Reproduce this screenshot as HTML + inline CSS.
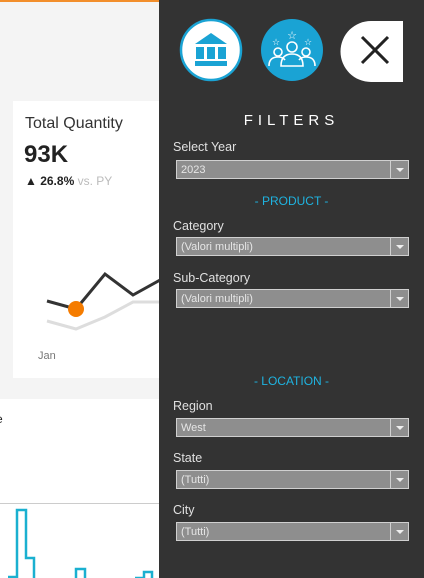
<!DOCTYPE html>
<html><head><style>
body{margin:0;width:424px;height:578px;overflow:hidden;background:#f4f4f4;position:relative;font-family:"Liberation Sans","DejaVu Sans",sans-serif}
.abs{position:absolute}
.dd{position:absolute;left:176px;width:231px;height:17px;background:#8e8e8e;border:1px solid #d0d0d0;color:#e6e6e6;font-size:11px;line-height:18px;box-sizing:content-box}
.dd span{padding-left:4px}
.dd .ar{position:absolute;right:0;top:0;width:17px;height:17px;border-left:1px solid #d0d0d0}
.dd .ar:after{content:"";position:absolute;left:5px;top:7px;border-left:4px solid transparent;border-right:4px solid transparent;border-top:4px solid #eee}
.lbl{position:absolute;left:173px;color:#e0e0e0;font-size:12.5px}
.sec{position:absolute;left:159px;width:265px;text-align:center;color:#1fb3e0;font-size:12px}
</style></head><body>
<div class="abs" style="left:0;top:0;width:160px;height:2px;background:#f28e2b"></div>
<div class="abs" style="left:13px;top:101px;width:147px;height:277px;background:#fff"></div>
<div class="abs" style="left:25px;top:115px;font-size:16px;color:#333">Total Quantity</div>
<div class="abs" style="left:24px;top:141px;font-size:24px;font-weight:bold;color:#222">93K</div>
<div class="abs" style="left:25px;top:174px;font-size:12px;color:#222"><b>▲ 26.8%</b> <span style="color:#bbb">vs. PY</span></div>
<svg class="abs" style="left:0;top:0" width="160" height="400">
<polyline points="47,301 76,309 105,274 133,295 160,280" fill="none" stroke="#333" stroke-width="3"/>
<polyline points="47,321 76,329 105,317 133,302 160,302" fill="none" stroke="#ddd" stroke-width="3"/>
<circle cx="76" cy="309" r="8" fill="#f57c00"/>
</svg>
<div class="abs" style="left:38px;top:350px;font-size:11px;color:#777">Jan</div>
<div class="abs" style="left:0;top:399px;width:160px;height:179px;background:#fff"></div>
<div class="abs" style="left:0;top:503px;width:160px;height:1px;background:#ccc"></div>
<div class="abs" style="left:-4px;top:412px;font-size:12px;color:#222">e</div>
<svg class="abs" style="left:0;top:505px" width="160" height="73">
<polyline points="8,72 17,72 17,5 26,5 26,53 34,53 34,73" fill="none" stroke="#1ab0d0" stroke-width="2.5"/>
<polyline points="76,73 76,64 85,64 85,73" fill="none" stroke="#1ab0d0" stroke-width="2.5"/>
<polyline points="135,73 144,73 144,67 152,67 152,73" fill="none" stroke="#1ab0d0" stroke-width="2.5"/>
</svg>
<div class="abs" style="left:159px;top:0;width:265px;height:578px;background:#333"></div>
<svg class="abs" style="left:159px;top:0" width="265" height="100">
<circle cx="52" cy="50" r="30" fill="#fff" stroke="#1aa3d4" stroke-width="2.5"/>
<path d="M36 44 L52 33 L68 44 Z" fill="#1aa3d4"/>
<rect x="37" y="47" width="8" height="12" fill="#1aa3d4"/><rect x="48" y="47" width="8" height="12" fill="#1aa3d4"/><rect x="59" y="47" width="8" height="12" fill="#1aa3d4"/>
<rect x="36" y="61" width="32" height="5" fill="#1aa3d4"/>
<circle cx="133" cy="50" r="31" fill="#1aa3d4"/>
<g fill="none" stroke="#fff" stroke-width="1.6">
<circle cx="133" cy="47" r="5"/><path d="M122 66 q0 -12 11 -12 q11 0 11 12 z"/>
<circle cx="119" cy="52" r="4"/><path d="M110 66 q0 -9 9 -9 q5 0 7 3"/>
<circle cx="147" cy="52" r="4"/><path d="M156 66 q0 -9 -9 -9 q-5 0 -7 3"/>
<text x="133" y="39" fill="#fff" stroke="none" font-size="11" text-anchor="middle">☆</text>
<text x="117" y="45" fill="#fff" stroke="none" font-size="9" text-anchor="middle">☆</text>
<text x="149" y="45" fill="#fff" stroke="none" font-size="9" text-anchor="middle">☆</text>
</g>
<path d="M212 21 H244 V82 H212 A30 30 0 0 1 212 21 Z" fill="#fff"/>
<path d="M203 37 L229 63 M229 37 L203 63" stroke="#222" stroke-width="3"/>
</svg>
<div class="abs" style="left:159px;width:265px;top:112px;text-align:center;color:#fff;font-size:15px;letter-spacing:5px">FILTERS</div>
<div class="lbl" style="top:140px">Select Year</div>
<div class="dd" style="top:160px"><span>2023</span><div class="ar"></div></div>
<div class="sec" style="top:194px">- PRODUCT -</div>
<div class="lbl" style="top:219px">Category</div>
<div class="dd" style="top:237px"><span>(Valori multipli)</span><div class="ar"></div></div>
<div class="lbl" style="top:271px">Sub-Category</div>
<div class="dd" style="top:289px"><span>(Valori multipli)</span><div class="ar"></div></div>
<div class="sec" style="top:374px">- LOCATION -</div>
<div class="lbl" style="top:399px">Region</div>
<div class="dd" style="top:418px"><span>West</span><div class="ar"></div></div>
<div class="lbl" style="top:451px">State</div>
<div class="dd" style="top:470px"><span>(Tutti)</span><div class="ar"></div></div>
<div class="lbl" style="top:503px">City</div>
<div class="dd" style="top:522px"><span>(Tutti)</span><div class="ar"></div></div>
</body></html>
